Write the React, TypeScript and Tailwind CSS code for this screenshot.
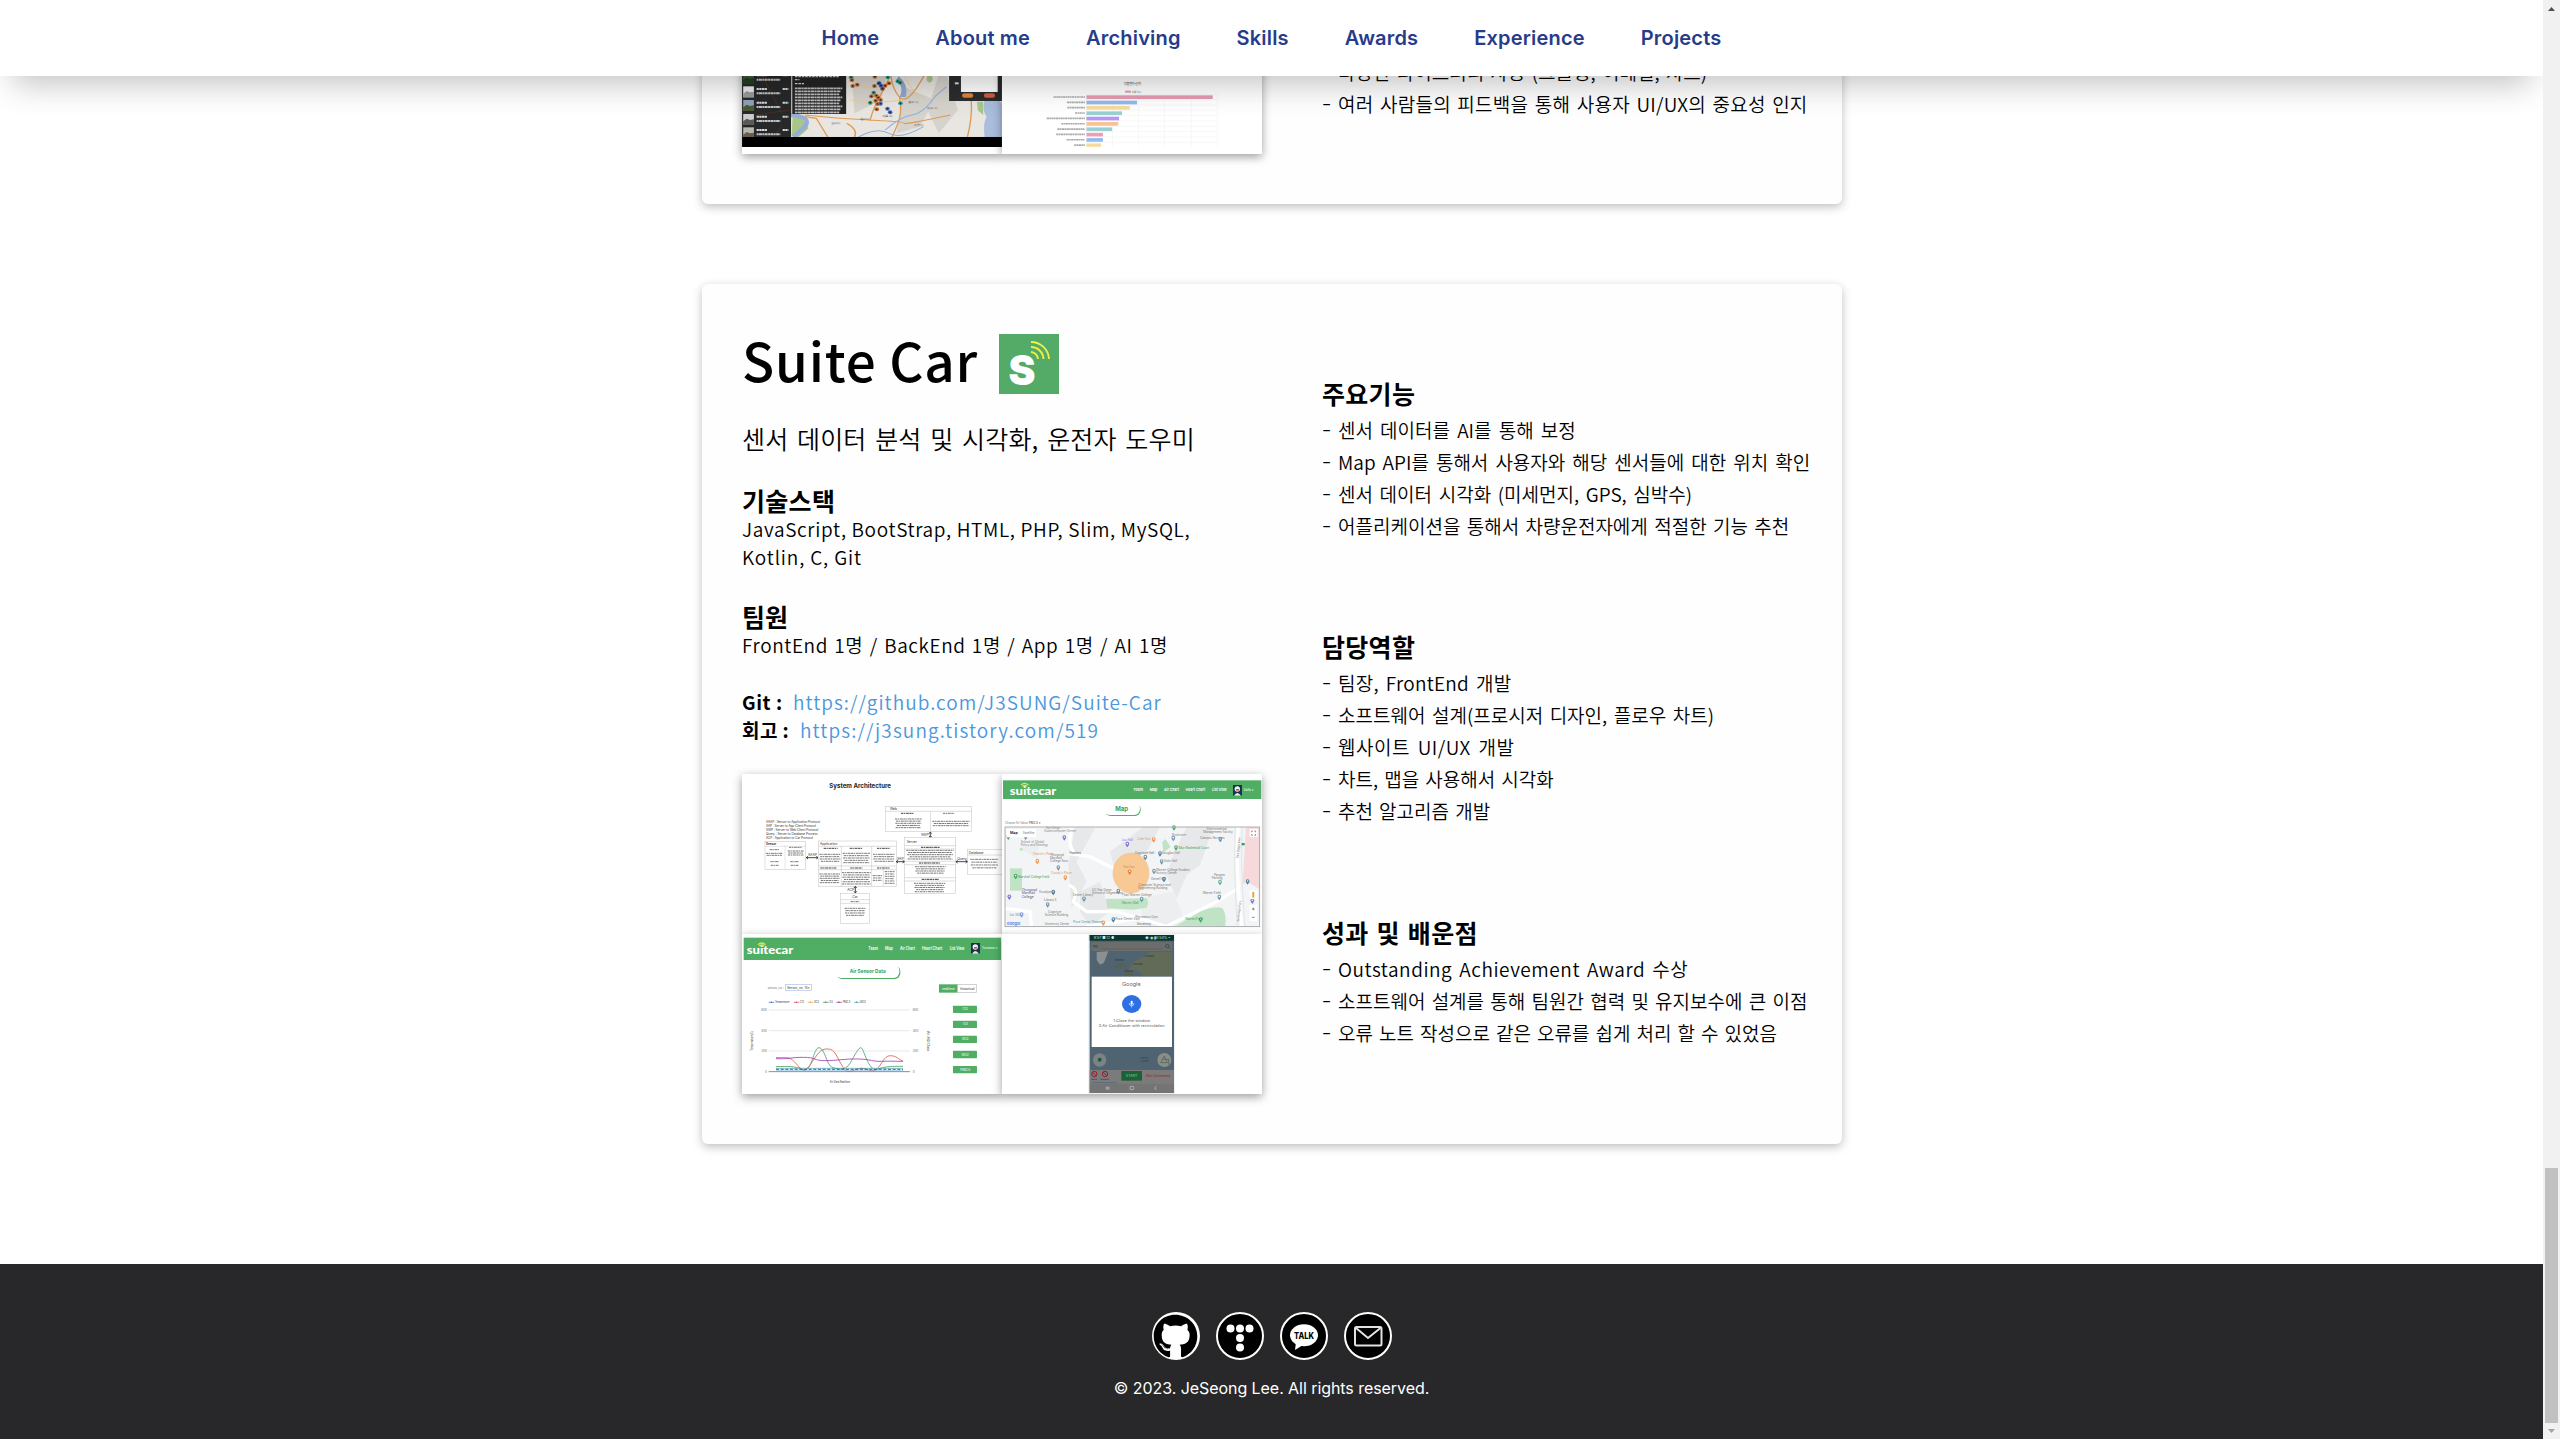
import type { ReactNode } from "react";
import { FaGithub } from "react-icons/fa";

const GREEN = "#4fae64";

function Thumb({ x, y, scale = "0.3333", children }: { x: number; y: number; scale?: string; children: ReactNode }) {
  return (
    <svg
      viewBox="0 0 260 160"
      className="block h-[160px] w-[260px] bg-white font-['Inter',sans-serif] shadow-[0_3px_9px_rgba(0,0,0,0.38)]"
    >
      <g transform={`translate(${x} ${y}) scale(${scale})`}>{children}</g>
    </svg>
  );
}

function T({
  x,
  y,
  s,
  children,
  c = "#333",
  a = "start",
  w = 400,
  l,
}: {
  x: number;
  y: number;
  s: number;
  children: string;
  c?: string;
  a?: "start" | "middle" | "end";
  w?: number;
  l?: number;
}) {
  return (
    <text x={x} y={y} fontSize={s} fill={c} textAnchor={a} fontWeight={w} textLength={l} lengthAdjust="spacingAndGlyphs">
      {children}
    </text>
  );
}

/* Rows of dashes standing for text too small to read */
function Scribble({ x, y, w, n, gap = 7, c = "#777" }: { x: number; y: number; w: number; n: number; gap?: number; c?: string }) {
  const shrink = [0, 0.08, 0.03, 0.14, 0.05];
  return (
    <g stroke={c} strokeWidth={3} strokeDasharray="7 1.5 4 2 9 1.5">
      {Array.from({ length: n }, (_, i) => {
        const d = (w * shrink[i % 5]) / 2;
        return <path key={i} d={`M${x + d} ${y + i * gap}H${x + w - d}`} />;
      })}
    </g>
  );
}

function Box({ x, y, w, h }: { x: number; y: number; w: number; h: number }) {
  return <rect x={x} y={y} width={w} height={h} fill="#fff" stroke="#c4c4c4" strokeWidth={1.6} />;
}

function Architecture() {
  return (
    <Thumb x={-7} y={-9}>
      <T x={283} y={69} s={20} w={700} c="#222" l={185}>System Architecture</T>
      <T x={93} y={175} s={10.5} l={162}>SAAP : Sensor to Application Protocol</T>
      <T x={93} y={187} s={10.5} l={150}>SAP : Server to App Client Protocol</T>
      <T x={93} y={199} s={10.5} l={157}>SWP : Server to Web Client Protocol</T>
      <T x={93} y={210} s={10.5} l={155}>Query : Server to Database Process</T>
      <T x={93} y={221} s={10.5} l={141}>ACP : Application to Car Protocol</T>

      <Box x={90} y={229} w={121} h={84} />
      <path d="M90 244H211M150 244V313" stroke="#ccc" strokeWidth={1.5} />
      <T x={93} y={240} s={9} w={700}>Sensor</T>
      <Scribble x={104} y={254} w={28} n={1} />
      <Scribble x={162} y={247} w={40} n={1} />
      <Scribble x={93} y={265} w={50} n={2} gap={6} />
      <Scribble x={158} y={258} w={48} n={3} gap={6} />
      <Scribble x={106} y={290} w={26} n={2} gap={11} />
      <Scribble x={166} y={290} w={26} n={2} gap={11} />

      <Box x={250} y={228} w={234} h={136} />
      <path d="M250 244H484M250 303H484M250 314H484M319 244V364M410 244V364M445 314V364" stroke="#bbb" strokeWidth={1.5} />
      <T x={255} y={240} s={11} l={52}>Application</T>
      <Scribble x={266} y={250} w={42} n={1} c="#444" />
      <Scribble x={344} y={250} w={38} n={1} c="#444" />
      <Scribble x={426} y={250} w={40} n={1} c="#444" />
      <Scribble x={253} y={268} w={64} n={4} />
      <Scribble x={323} y={265} w={82} n={5} />
      <Scribble x={414} y={268} w={66} n={4} />
      <Scribble x={256} y={309} w={48} n={1} c="#444" />
      <Scribble x={346} y={309} w={36} n={1} c="#444" />
      <Scribble x={426} y={309} w={38} n={1} c="#444" />
      <Scribble x={253} y={327} w={62} n={5} gap={6.5} />
      <Scribble x={321} y={323} w={86} n={6} gap={6.8} />
      <Scribble x={413} y={332} w={28} n={3} />
      <Scribble x={449} y={320} w={30} n={6} />

      <Box x={451} y={124} w={259} h={76} />
      <path d="M451 139H710M587 139V200" stroke="#bbb" strokeWidth={1.5} />
      <T x={465} y={135} s={10}>Web</T>
      <Scribble x={498} y={145} w={38} n={1} c="#444" />
      <Scribble x={624} y={145} w={34} n={1} />
      <Scribble x={480} y={162} w={80} n={5} gap={6.5} />
      <Scribble x={592} y={169} w={112} n={3} gap={6.5} />
      <T x={558} y={214} s={10}>SWP</T>
      <path d="M586 203V216M582 206L586 201L590 206M582 213L586 218L590 213" stroke="#222" strokeWidth={2.5} fill="none" />

      <Box x={509} y={218} w={153} h={168} />
      <path d="M509 242H662M509 252H662M509 289H662M509 299H662M509 338H662M509 348H662" stroke="#bbb" strokeWidth={1.5} />
      <T x={515} y={233} s={10}>Server</T>
      <Scribble x={558} y={247} w={56} n={1} c="#333" />
      <Scribble x={514} y={256} w={142} n={5} gap={6.5} />
      <Scribble x={552} y={294} w={64} n={1} c="#333" />
      <Scribble x={540} y={305} w={92} n={4} gap={6.5} />
      <Scribble x={560} y={343} w={52} n={1} c="#333" />
      <Scribble x={537} y={355} w={94} n={5} gap={6.3} />

      <Box x={697} y={254} w={110} h={74} />
      <path d="M697 270H800" stroke="#bbb" strokeWidth={1.5} />
      <T x={701} y={266} s={10}>Database</T>
      <Scribble x={706} y={283} w={84} n={4} gap={8.5} />

      <Box x={317} y={385} w={87} h={91} />
      <path d="M317 404H404M317 415H404" stroke="#bbb" strokeWidth={1.5} />
      <T x={352} y={398} s={10}>Car</T>
      <Scribble x={347} y={410} w={26} n={1} />
      <Scribble x={329} y={430} w={62} n={4} />

      <T x={219} y={274} s={10}>SAAP</T>
      <T x={486} y={284} s={10}>SAP</T>
      <T x={667} y={285} s={10}>Query</T>
      <T x={337} y={377} s={10}>ACP</T>
      <path d="M214 278H249M484 290H508M663 290H697M361 365V383" stroke="#222" strokeWidth={2.5} />
      <path d="M219 274L214 278L219 282M244 274L249 278L244 282M357 369L361 364L365 369M357 379L361 384L365 379M489 286L484 290L489 294M503 286L508 290L503 294M668 286L663 290L668 294M692 286L697 290L692 294" stroke="#222" strokeWidth={2.5} fill="none" />
    </Thumb>
  );
}

function Brand({ x, y }: { x: number; y: number }) {
  return (
    <g>
      <text x={x} y={y} fontSize={35} fontWeight={900} fill="#fff" textLength={140} lengthAdjust="spacingAndGlyphs" fontFamily="Lato">
        suitecar
      </text>
      <path d={`M${x + 34} ${y - 29}q11 -10 22 0M${x + 38} ${y - 25}q7 -6 14 0`} stroke="#d9e84a" strokeWidth={4} fill="none" />
    </g>
  );
}

function Avatar({ x, y }: { x: number; y: number }) {
  return (
    <g>
      <rect x={x} y={y} width={27} height={32} fill="#17344f" />
      <circle cx={x + 13} cy={y + 12} r={8} fill="#f2f2f2" />
      <path d={`M${x + 3} ${y + 32}q10 -16 21 0z`} fill="#dfe7ee" />
      <rect x={x + 9} y={y + 12} width={9} height={5} fill="#c05a4a" />
    </g>
  );
}

const PINS: [number, number, string][] = [
  [25, 218, "#5c7f92"], [77, 218, "#5c7f92"], [193, 220, "#6a5fd0"], [382, 240, "#6a5fd0"], [461, 226, "#e98a3c"],
  [520, 222, "#5c8aa0"], [661, 225, "#4b8db0"], [528, 250, "#2e9e50"], [480, 268, "#37708c"], [436, 279, "#4a7f99"],
  [485, 292, "#5c8aa0"], [462, 321, "#5c8aa0"], [492, 345, "#37708c"], [112, 291, "#e98a3c"], [175, 310, "#5c8aa0"],
  [196, 340, "#e98a3c"], [47, 336, "#2e9e50"], [389, 323, "#dd7a2c"], [355, 381, "#4a7f99"], [160, 384, "#37708c"],
  [143, 421, "#5c8aa0"], [252, 404, "#5c8aa0"], [28, 398, "#6a5fd0"], [425, 405, "#3f96a8"], [340, 466, "#2b6fa5"],
  [310, 476, "#e98a3c"], [602, 466, "#2e9e50"], [658, 399, "#5c8aa0"], [660, 354, "#4fa093"], [743, 352, "#37708c"],
  [757, 410, "#6a5fd0"], [65, 451, "#6a8fe0"], [522, 190, "#2e9e50"],
];

function MapShot() {
  return (
    <Thumb x={-2} y={-9}>
      <rect x={9} y={46} width={775} height={56} fill={GREEN} />
      <Brand x={29} y={89} />
      <T x={400} y={79} s={12} c="#fff" w={600} l={29}>Team</T>
      <T x={449} y={79} s={12} c="#fff" w={600} l={23}>Map</T>
      <T x={492} y={79} s={12} c="#fff" w={600} l={45}>Air Chart</T>
      <T x={557} y={79} s={12} c="#fff" w={600} l={59}>Heart Chart</T>
      <T x={636} y={79} s={12} c="#fff" w={600} l={44}>List View</T>
      <Avatar x={699} y={60} />
      <T x={731} y={78} s={10} c="#fff" l={30}>Dafla ▾</T>
      <rect x={315} y={116} width={107} height={37} rx={17} fill={GREEN} />
      <rect x={312} y={113} width={108} height={37} rx={17} fill="#fff" />
      <T x={365} y={139} s={18} c="#35a05a" w={700} a="middle">Map</T>
      <T x={15} y={178} s={10} c="#777" l={70}>Choose Air Value:</T>
      <T x={87} y={178} s={10} c="#333" l={34}>PM2.5 ▾</T>

      <rect x={15} y={186} width={764} height={299} fill="#f3f4f5" />
      <path d="M225 186L285 190L230 290L260 350L215 430L205 300Z M430 186L480 186L440 260L345 320L330 260Z M560 186L640 186L600 300L560 330L530 400L500 330L520 270Z M240 380L300 350L330 440L270 484L240 440Z" fill="#e6e8ea" />
      <path d="M420 400L520 380L560 484L430 484Z M60 250L120 230L110 280Z" fill="#edeeef" />
      <path d="M205 265L270 275L340 310M225 265Q200 240 215 190M205 360Q240 370 220 410L260 440L350 440L500 484M15 430L90 440L95 484M500 484L650 410L715 370M715 186Q705 300 725 484M260 484L420 460" stroke="#fff" strokeWidth={10} fill="none" />
      <path d="M706 186Q700 300 712 484M727 186Q720 300 735 484" stroke="#d9dcdf" strokeWidth={2} fill="none" />
      <rect x={30} y={310} width={36} height={67} fill="#bfe3c4" />
      <path d="M487 232L496 222L512 246L490 262Z" fill="#bfe3c4" />
      <path d="M318 402L440 400Q448 412 440 428L400 434L322 430Z" fill="#bfe3c4" />
      <path d="M528 482L600 440Q650 420 668 430Q680 450 676 483Z" fill="#bfe3c4" />
      <path d="M738 187H778V372L745 352L728 356Z" fill="#f6d9da" />
      <circle cx={64} cy={253} r={5} fill="#bfe3c4" />
      <ellipse cx={393} cy={324} rx={54} ry={60} fill="#f8c995" stroke="#f0bf86" strokeWidth={1.5} />
      {PINS.map(([px, py, c], i) => (
        <g key={i} opacity={0.85}>
          <path d={`M${px - 5.5} ${py - 4}a5.5 5.5 0 1 1 11 0q0 5 -5.5 11q-5.5 -6 -5.5 -11z`} fill={c} />
          <circle cx={px} cy={py - 4} r={2.4} fill="#fff" />
        </g>
      ))}
      <T x={62} y={235} s={9} c="#888">School of Global</T>
      <T x={62} y={244} s={9} c="#888">Policy and Strategy</T>
      <T x={137} y={193} s={9} c="#888">San Diego</T>
      <T x={132} y={202} s={9} c="#888">Supercomputer Center</T>
      <T x={98} y={270} s={9} c="#d89a6a">Charlie's Place</T>
      <T x={150} y={272} s={9} c="#777">Thurgood</T>
      <T x={150} y={281} s={9} c="#777">Marshall</T>
      <T x={150} y={290} s={9} c="#777">College Apts</T>
      <T x={208} y={268} s={9} c="#444">Hopkins</T>
      <T x={54} y={339} s={9} c="#3a9a58">Marshall College Field</T>
      <T x={65} y={378} s={10} c="#557">Thurgood</T>
      <T x={65} y={388} s={10} c="#557">Marshall</T>
      <T x={65} y={398} s={10} c="#557">College</T>
      <T x={118} y={383} s={9} c="#777">Eucalyptus</T>
      <T x={154} y={328} s={9} c="#d89a6a">Goody's Place</T>
      <T x={365} y={228} s={9} c="#8a80d8">Lou Hall</T>
      <T x={412} y={226} s={9} c="#d89a6a">Café Vita</T>
      <T x={516} y={212} s={9} c="#888">Bookstore</T>
      <T x={536} y={251} s={9} c="#3a9a58">Muir Basketball Court</T>
      <T x={486} y={268} s={9} c="#777">Douglas Hall</T>
      <T x={492} y={292} s={9} c="#777">Solis Hall</T>
      <T x={404} y={266} s={9} c="#666">Cognitive Hall</T>
      <T x={370} y={310} s={9} c="#c98850">Fan Fan</T>
      <T x={468} y={318} s={9} c="#777">Warren College Student</T>
      <T x={468} y={327} s={9} c="#777">Activity Center</T>
      <T x={453} y={345} s={9} c="#777">Geisel Hall</T>
      <T x={415} y={362} s={9} c="#777">Computer Science and</T>
      <T x={415} y={371} s={9} c="#777">Engineering Building</T>
      <T x={276} y={379} s={9} c="#777">UC San Diego</T>
      <T x={276} y={388} s={9} c="#777">School of Engineering</T>
      <T x={371} y={392} s={9} c="#777">Earl Warren College</T>
      <T x={365} y={416} s={9} c="#5a9a68">Warren Mall</T>
      <T x={218} y={392} s={9} c="#777">Center Library</T>
      <T x={132} y={408} s={9} c="#777">Library II</T>
      <T x={144} y={444} s={9} c="#777">Cognitive</T>
      <T x={134} y={453} s={9} c="#777">Science Building</T>
      <T x={134} y={479} s={9} c="#777">University Center</T>
      <T x={219} y={474} s={9} c="#3f96a8">Price Center Theater</T>
      <T x={346} y={466} s={9} c="#777">Price Center East</T>
      <T x={406} y={458} s={9} c="#777">Recreation Gym</T>
      <T x={410} y={481} s={9} c="#555">University</T>
      <T x={620} y={194} s={9} c="#777">Environmental</T>
      <T x={610} y={203} s={9} c="#777">Management Facility</T>
      <T x={600} y={223} s={9} c="#777">Campus Services</T>
      <T x={642} y={334} s={9} c="#777">Pangea</T>
      <T x={635} y={343} s={9} c="#777">Parking</T>
      <T x={608} y={388} s={9} c="#777">Warren Field</T>
      <T x={555} y={466} s={9} c="#3a9a58">Warren Field</T>
      <T x={29} y={452} s={9} c="#777">Lot 352</T>
      <g transform="rotate(-84 712 280)"><T x={712} y={283} s={9} c="#666">San Diego Fwy</T></g>
      <g transform="rotate(-84 712 470)"><T x={712} y={475} s={9} c="#666">San Diego Fwy</T></g>
      <rect x={20} y={192} width={88} height={25} fill="#fff" />
      <T x={30} y={208} s={11} c="#222" w={600}>Map</T>
      <T x={68} y={208} s={11} c="#777" l={35}>Satellite</T>
      <rect x={749} y={192} width={24} height={24} fill="#fff" />
      <path d="M755 202V198H759M763 198H767V202M767 207V211H763M759 211H755V207" stroke="#666" strokeWidth={2} fill="none" />
      <rect x={749} y={376} width={22} height={26} fill="#fff" />
      <circle cx={760} cy={384} r={3.5} fill="#e9a83a" />
      <rect x={757} y={387} width={6} height={11} fill="#e9a83a" />
      <rect x={749} y={420} width={22} height={48} fill="#fff" />
      <path d="M756 432H764M760 428V436M756 457H764" stroke="#555" strokeWidth={2} />
      <rect x={725} y={234} width={9} height={7} fill="#2f9e60" />
      <T x={20} y={479} s={12} c="#4a80e8" w={600}>Google</T>
      <rect x={15} y={186} width={764} height={299} fill="none" stroke="#9da0a4" strokeWidth={2.5} />
    </Thumb>
  );
}

const LEGEND: [number, number, string, string][] = [
  [101, 43, "#3a62c8", "Temperature"], [176, 12, "#d6455c", "CO"], [218, 15, "#e8a23c", "SO2"],
  [264, 11, "#3b8f56", "O3"], [304, 23, "#8a2fa5", "PM2.5"], [357, 17, "#3ba0a8", "NO2"],
];

function AirChart() {
  return (
    <Thumb x={-7} y={-4}>
      <rect x={26} y={23} width={772} height={67} fill={GREEN} />
      <Brand x={35} y={73} />
      <T x={400} y={59} s={13} c="#fff" w={600} l={29}>Team</T>
      <T x={450} y={59} s={13} c="#fff" w={600} l={24}>Map</T>
      <T x={495} y={59} s={13} c="#fff" w={600} l={45}>Air Chart</T>
      <T x={561} y={59} s={13} c="#fff" w={600} l={61}>Heart Chart</T>
      <T x={644} y={59} s={13} c="#fff" w={600} l={44}>List View</T>
      <Avatar x={708} y={39} />
      <T x={741} y={57} s={10} c="#fff" l={48}>Yunseon ▾</T>
      <rect x={304} y={107} width={192} height={40} rx={17} fill={GREEN} />
      <rect x={301} y={104} width={192} height={40} rx={17} fill="#fff" />
      <T x={344} y={130} s={16} c="#35a05a" w={700} l={108}>Air Sensor Data</T>
      <T x={98} y={176} s={10} c="#777" l={48}>sensor_no :</T>
      <rect x={152} y={163} width={77} height={18} fill="#fff" stroke="#a9c0e6" strokeWidth={2} />
      <T x={156} y={176} s={10} l={70}>Sensor_no. 15 ▾</T>
      <rect x={612} y={163} width={56} height={25} fill={GREEN} />
      <rect x={668} y={163} width={56} height={24} fill="#fff" stroke="#bbb" strokeWidth={2} />
      <T x={640} y={179} s={10} c="#fff" a="middle">realtime</T>
      <T x={697} y={179} s={10} a="middle">historical</T>
      {LEGEND.map(([lx, w, c, name]) => (
        <g key={name}>
          <path d={`M${lx} 217H${lx + 17}`} stroke={c} strokeWidth={2} />
          <circle cx={lx + 8} cy={217} r={2.2} fill={c} />
          <T x={lx + 19} y={220} s={9} l={w}>{name}</T>
        </g>
      ))}
      <path d="M101 240H525M101 302H525M101 363H525" stroke="#ddd" strokeWidth={2} />
      <path d="M101 425H525" stroke="#555" strokeWidth={2} />
      {["600", "400", "200", "0"].map((n, i) => (
        <g key={n}>
          <T x={96} y={243 + i * 62} s={9} c="#666" a="end">{n}</T>
          <T x={533} y={243 + i * 62} s={9} c="#666">{n}</T>
        </g>
      ))}
      <path d="M123 410C160 409 180 408 205 419S235 353 252 353S275 405 290 411S330 425 345 400S370 353 378 353S400 425 425 418S450 409 504 409" stroke="#4fa06a" strokeWidth={2.5} fill="none" />
      <path d="M123 383C165 383 165 380 185 403S210 428 232 395S260 356 280 357S305 380 320 405S340 425 350 423S365 415 380 415S405 425 420 421S445 376 466 377S490 388 504 394" stroke="#d6604f" strokeWidth={2.5} fill="none" />
      <path d="M123 386C160 388 165 382 205 382S235 392 270 392S330 386 370 387S410 395 440 394S480 394 504 394" stroke="#a53bb5" strokeWidth={2.5} fill="none" />
      <path d="M123 415H504" stroke="#3ba0a8" strokeWidth={2} />
      <path d="M123 418H504" stroke="#2c4fc0" strokeWidth={3} strokeDasharray="9 5" />
      <path d="M123 421H504" stroke="#7ab2e0" strokeWidth={2} />
      <T x={284} y={458} s={10} l={61}>Air Data Realtime</T>
      <g transform="rotate(-90 53 362)"><T x={53} y={362} s={9} l={58}>Temperature(C)</T></g>
      <g transform="rotate(90 575 303)"><T x={575} y={303} s={9} l={60}>Air AQI Data</T></g>
      {["CO", "O3", "SO2", "NO2", "PM2.5"].map((n, i) => (
        <g key={n}>
          <rect x={654} y={227 + i * 45.2} width={72} height={22} rx={2} fill={GREEN} />
          <T x={691} y={241 + i * 45.2} s={10} c="#fff" a="middle">{n}</T>
        </g>
      ))}
    </Thumb>
  );
}

function Phone() {
  return (
    <Thumb x={-2} y={-4}>
      <rect x={264} y={10} width={261} height={482} fill="#eef2f2" />
      <rect x={269} y={15} width={253} height={474} fill="#4f6371" />
      <rect x={269} y={15} width={253} height={17} fill="#08352e" />
      <T x={281} y={27} s={11} c="#cfe0dc" l={62}>9:57 ■ ▢ ●</T>
      <T x={435} y={27} s={11} c="#cfe0dc" l={76}>◆ ◉ ▮ill 54% ▪</T>
      <path d="M290 66L325 64L312 98L300 104L290 90Z" fill="#8b9093" />
      <path d="M385 124L400 96L430 80L450 66L517 66V138L430 138L410 118Z" fill="#626b58" />
      <path d="M340 112Q355 95 380 104L378 112Z M372 128L395 124L402 138H376Z" fill="#566250" />
      <T x={344} y={94} s={8} c="#2b343a">Iceland</T>
      <T x={435} y={80} s={8} c="#2b343a">Finland</T>
      <T x={400} y={106} s={8} c="#2b343a">Norway</T>
      <T x={373} y={126} s={8} c="#2b343a">Ireland</T>
      <rect x={274} y={36} width={243} height={27} rx={2} fill="#6b6d6d" />
      <path d="M279 47H293M279 51H293" stroke="#1b5a45" strokeWidth={2.5} />
      <path d="M303 57H487" stroke="#555" strokeWidth={1.5} />
      <circle cx={502} cy={48} r={5} fill="none" stroke="#164c3d" strokeWidth={2} />
      <path d="M506 52L511 57" stroke="#164c3d" strokeWidth={2} />
      <rect x={275} y={140} width={241} height={211} fill="#fff" />
      <T x={366} y={168} s={16} c="#666" l={56}>Google</T>
      <ellipse cx={395} cy={222} rx={29} ry={27} fill="#2f6fe4" />
      <rect x={392} y={212} width={6} height={12} rx={3} fill="#fff" />
      <path d="M388 220a7 7 0 0 0 14 0M395 227V232" stroke="#fff" strokeWidth={2} fill="none" />
      <T x={395} y={276} s={11} c="#555" a="middle" l={110}>1.Close the window</T>
      <T x={395} y={290} s={11} c="#555" a="middle" l={198}>2.Air Conditioner with recirculation</T>
      <circle cx={299} cy={390} r={20} fill="#7d8384" />
      <circle cx={299} cy={389} r={6} fill="#1d5a45" />
      <circle cx={493} cy={390} r={21} fill="#8a8e88" />
      <path d="M482 398L493 378L502 398L482 398ZM488 388H506V404" stroke="#495b50" strokeWidth={2} fill="none" />
      <T x={418} y={386} s={8} c="#33434e">Atlantic</T>
      <T x={422} y={395} s={8} c="#33434e">Ocean</T>
      <rect x={269} y={420} width={253} height={42} fill="#7b7b7b" />
      {[283, 315].map((cx) => (
        <g key={cx}>
          <circle cx={cx} cy={432} r={8} fill="none" stroke="#9b1c2a" strokeWidth={3} />
          <path d={`M${cx - 6} 426L${cx + 6} 438`} stroke="#9b1c2a" strokeWidth={3} />
        </g>
      ))}
      <path d="M274 448H292M301 448H327" stroke="#444" strokeWidth={2.5} strokeDasharray="5 1" />
      <path d="M274 458H351" stroke="#3e5a80" strokeWidth={1.5} />
      <rect x={364} y={423} width={62} height={29} fill="#1b6238" />
      <T x={395} y={441} s={11} c="#8ac79c" a="middle">START</T>
      <T x={439} y={440} s={10} c="#9b1c2a" l={72}>Not Connected</T>
      <rect x={269} y={462} width={253} height={27} fill="#747474" />
      <path d="M319 470V479M323 470V479M327 470V479M469 469L464 474L469 480" stroke="#ccc" strokeWidth={2} fill="none" />
      <rect x={390} y={469} width={11} height={10} rx={3} fill="none" stroke="#ccc" strokeWidth={2} />
    </Thumb>
  );
}

const DOTS: [number, number, string][] = [
  [421, 232, "#2aa08a"], [423, 240, "#c46a2c"], [425, 258, "#c46a2c"], [437, 254, "#c46a2c"], [483, 230, "#c46a2c"],
  [494, 250, "#2f4fa0"], [499, 257, "#3a5fc0"], [503, 266, "#8a4a5a"], [510, 257, "#c46a2c"], [520, 250, "#c46a2c"],
  [482, 258, "#c46a2c"], [517, 232, "#3aa890"], [543, 244, "#2aa08a"], [549, 248, "#2aa08a"], [480, 278, "#2aa08a"],
  [474, 289, "#c46a2c"], [487, 287, "#c46a2c"], [492, 293, "#c46a2c"], [498, 300, "#c46a2c"], [485, 302, "#c46a2c"],
  [471, 308, "#2aa08a"], [490, 312, "#c46a2c"], [498, 311, "#4a70d0"], [488, 328, "#c46a2c"], [516, 326, "#4a70d0"],
  [523, 337, "#3a60c8"], [550, 310, "#2aa0b8"],
];

function DarkMap() {
  return (
    <Thumb x={-52} y={6} scale="0.3827 0.3333">
      <rect x={136} y={190} width={679} height={221} fill="#e9e5e0" />
      <path d="M420 190L520 190L500 300L430 340Z M560 260L640 300L600 380L540 400Z M660 190L700 330L650 400L620 330Z" fill="#d6d2cc" />
      <path d="M770 300Q800 290 815 310V411H770Q765 370 775 350Q762 330 770 300Z" fill="#a9bddc" />
      <path d="M545 228Q570 250 565 290L548 292Q560 260 540 240Z" fill="#8fa6cc" />
      <path d="M620 228h12q6 14 -6 20q-12 -4 -6 -20zM750 305h16v40l-14 -14zM268 345l22 4l20 36l-26 26l-18 -4z" fill="#a8c68c" />
      <path d="M262 345Q320 350 300 380L270 411" stroke="#96add4" strokeWidth={12} fill="none" />
      <path d="M300 345Q380 355 470 360T560 370T680 345M470 362Q480 320 505 270T525 190M525 228Q530 270 548 292T600 250T620 190M548 292Q556 340 540 380L528 411M735 303Q738 350 725 411M410 370Q440 390 430 411M300 350L330 355L360 411" stroke="#df9a52" strokeWidth={3.5} fill="none" />
      <path d="M510 390Q550 350 580 345T640 290L670 260M440 411Q490 380 520 400T610 380" stroke="#8db0dc" strokeWidth={3} fill="none" />
      <path d="M415 240Q470 280 520 250M420 300L470 310L560 300M560 230L600 300" stroke="#f2c878" strokeWidth={2} fill="none" />
      <T x={368} y={372} s={9} c="#555">성남시</T>
      <T x={444} y={360} s={9} c="#555">용인시</T>
      <T x={585} y={378} s={9} c="#555">이천시</T>
      <T x={620} y={328} s={9} c="#555">여주시</T>
      <T x={570} y={310} s={9} c="#555">광주시</T>
      <T x={502} y={351} s={9} c="#334">서울시</T>
      {DOTS.map(([cx, cy, c], i) => (
        <g key={i}>
          <circle cx={cx} cy={cy} r={6} fill={c} />
          <circle cx={cx} cy={cy} r={2.5} fill="#2a2420" />
        </g>
      ))}
      <rect x={136} y={190} width={128} height={221} fill="#26282a" />
      <path d="M190 228L240 340M170 345L262 330M215 411L240 380" stroke="#5a3020" strokeWidth={2} />
      {[218, 259, 300, 342, 382].map((y, i) => (
        <g key={y}>
          <rect x={139} y={y} width={28} height={Math.min(33, 411 - y)} fill={["#3e5d34", "#e8e8e8", "#8fa0b8", "#c9cdd0", "#b9b6ac"][i]} />
          <path d={`M139 ${y + 22}l9 -8l9 4l10 -2v${Math.min(17, 395 - y)}h-28z`} fill={["#22401e", "#9a9a9a", "#4a5a34", "#5c5a56", "#6a5c50"][i]} />
          <path d={`M174 ${y + 8}H202M242 ${y + 8}H257`} stroke="#d8d8d8" strokeWidth={6} strokeDasharray="6 1" />
          <path d={`M174 ${y + 21}H236`} stroke="#c4c4c4" strokeWidth={6} strokeDasharray="5 1 8 1" />
        </g>
      ))}
      <rect x={266} y={190} width={142} height={152} fill="#242424" />
      <path d="M267 190V342" stroke="#aaa" strokeWidth={1.5} />
      <path d="M274 230H390M274 239H286M274 251H298" stroke="#ccc" strokeWidth={4} strokeDasharray="7 2" />
      {Array.from({ length: 9 }, (_, i) => (
        <path key={i} d={`M274 ${265 + i * 9}H${398 - (i % 3) * 4}`} stroke="#bdbdbd" strokeWidth={5.5} strokeDasharray="6 1 9 1" />
      ))}
      <rect x={677} y={190} width={138} height={113} fill="#2b2c2e" />
      <rect x={708} y={190} width={96} height={86} fill="#fff" />
      <path d="M692 250H702" stroke="#ddd" strokeWidth={6} />
      <rect x={711} y={280} width={29} height={13} rx={6} fill="#dd8434" />
      <rect x={768} y={280} width={29} height={13} rx={6} fill="#d35a40" />
      <rect x={136} y={411} width={679} height={30} fill="#000" />
    </Thumb>
  );
}

const BARS: [number, string, number][] = [
  [1366, "#e79ab0", 950], [1168, "#8fbcee", 985], [1149, "#f6dc9b", 986], [1129, "#98d0d3", 1006], [1121, "#b894f4", 932],
  [1119, "#f6c48c", 970], [1103, "#98d0d3", 960], [1079, "#f09cb2", 957], [1079, "#8fbcee", 984], [1074, "#f6dc9b", 1004],
];

function BarChart() {
  return (
    <Thumb x={-312} y={6} scale="0.3827 0.3333">
      <text x={1133} y={256} fontSize={10} fill="#555" fontFamily="Noto Sans CJK KR" textLength={46}>작품별 수 순위</text>
      <rect x={1137} y={272} width={15} height={6} fill="#e79ab0" />
      <text x={1154} y={278} fontSize={7} fill="#777" fontFamily="Noto Sans CJK KR">작품개수</text>
      <path d="M1036 283V441M1104 283V441M1172 283V441M1240 283V441M1310 283V441M1378 283V441M1036 283H1378M1036 299H1378M1036 315H1378M1036 331H1378M1036 347H1378M1036 363H1378M1036 379H1378M1036 395H1378M1036 411H1378M1036 427H1378" stroke="#f2f2f2" strokeWidth={1.5} />
      {BARS.map(([end, c, lx], i) => (
        <g key={i}>
          <rect x={1036} y={286 + i * 16.05} width={end - 1036} height={i === 9 ? 10 : 11} fill={c} />
          <path d={`M${lx} ${291 + i * 16.05}H1032`} stroke="#aaa" strokeWidth={5} strokeDasharray="6 1 4 1" />
        </g>
      ))}
    </Thumb>
  );
}

type Line = [text: string, spacing: string];

function List({ items }: { items: Line[] }) {
  return (
    <ul>
      {items.map(([text, spacing]) => (
        <li key={text} className="flex h-8 text-[19px] leading-8 whitespace-nowrap">
          <span className="-mt-0.5 w-4 origin-left scale-x-140">-</span>
          <span className={spacing}>{text}</span>
        </li>
      ))}
    </ul>
  );
}

function Section({ title, items, className = "" }: { title: string; items: Line[]; className?: string }) {
  return (
    <section className={className}>
      <h3 className="mb-[6px] h-[30px] text-[25px] leading-[30px] font-bold tracking-[0.3px] [word-spacing:2px]">{title}</h3>
      <List items={items} />
    </section>
  );
}

const FEATURES: Line[] = [
  ["센서 데이터를 AI를 통해 보정", "[word-spacing:2.9px]"],
  ["Map API를 통해서 사용자와 해당 센서들에 대한 위치 확인", "[word-spacing:2.8px]"],
  ["센서 데이터 시각화 (미세먼지, GPS, 심박수)", "[word-spacing:2.4px]"],
  ["어플리케이션을 통해서 차량운전자에게 적절한 기능 추천", "[word-spacing:2.1px]"],
];
const ROLES: Line[] = [
  ["팀장, FrontEnd 개발", "[word-spacing:2.5px] tracking-[0.25px]"],
  ["소프트웨어 설계(프로시저 디자인, 플로우 차트)", "[word-spacing:2.3px]"],
  ["웹사이트 UI/UX 개발", "[word-spacing:3px] tracking-[0.5px]"],
  ["차트, 맵을 사용해서 시각화", "[word-spacing:1.9px]"],
  ["추천 알고리즘 개발", "[word-spacing:1.9px]"],
];
const RESULTS: Line[] = [
  ["Outstanding Achievement Award 수상", "[word-spacing:2.2px] tracking-[0.55px]"],
  ["소프트웨어 설계를 통해 팀원간 협력 및 유지보수에 큰 이점", "[word-spacing:2px]"],
  ["오류 노트 작성으로 같은 오류를 쉽게 처리 할 수 있었음", "[word-spacing:1.8px]"],
];
const PREVIOUS: Line[] = [
  ["다양한 라이브러리 사용 (크롤링, 이메일, 차트)", "[word-spacing:2.1px]"],
  ["여러 사람들의 피드백을 통해 사용자 UI/UX의 중요성 인지", "[word-spacing:2px] tracking-[0.25px]"],
];

function Logo() {
  return (
    <svg viewBox="0 0 60 60" className="size-[60px] bg-[#54ab67]">
      <text x={9.5} y={50.5} fontSize={41} fontWeight={900} fill="#fff" fontFamily="Inter" textLength={27} lengthAdjust="spacingAndGlyphs">
        S
      </text>
      <path d="M32 8A18 18 0 0 1 50 25M32 13A12.5 12.5 0 0 1 44.5 25M32 18A7.5 7.5 0 0 1 39 25" stroke="#f0ee48" strokeWidth={1.9} fill="none" />
    </svg>
  );
}

function Circle({ children }: { children: ReactNode }) {
  return (
    <a className="flex size-12 items-center justify-center overflow-hidden rounded-full border-2 border-white bg-black">{children}</a>
  );
}

export default function App() {
  return (
    <div className="flex h-[1439px] w-[2560px] overflow-hidden bg-white font-['Noto_Sans_CJK_KR',sans-serif] text-black">
      <div className="relative flex w-[2543px] flex-col overflow-hidden">
        <header className="absolute inset-x-0 top-0 z-10 flex h-[76px] items-center justify-center gap-14 bg-white font-['Inter',sans-serif] text-[20px] font-semibold tracking-[0.18px] text-[#263c8b] shadow-[0_20px_32px_-12px_rgba(0,0,0,0.24)]">
          {["Home", "About me", "Archiving", "Skills", "Awards", "Experience", "Projects"].map((n) => (
            <a key={n}>{n}</a>
          ))}
        </header>

        <main className="flex flex-col items-center pl-px">
          <article className="flex h-[204px] w-[1140px] rounded-b-md bg-[#fefefe] pl-10 font-[350] shadow-[0_3px_10px_rgba(0,0,0,0.25)]">
            <div className="-mt-[6px] mr-[60px] flex w-[520px]">
              <DarkMap />
              <BarChart />
            </div>
            <div className="pt-14">
              <List items={PREVIOUS} />
            </div>
          </article>

          <article className="mt-20 flex h-[860px] w-[1140px] rounded-md bg-[#fefefe] pl-10 font-[350] shadow-[0_3px_10px_rgba(0,0,0,0.25)]">
            <div className="mr-[60px] flex w-[520px] flex-col pt-[50px]">
              <div className="flex h-[60px] items-center">
                <h2 className="mr-[21px] w-[236px] pb-[11px] text-[53px] leading-[60px] font-medium tracking-[0.8px] whitespace-nowrap">Suite Car</h2>
                <Logo />
              </div>
              <p className="mt-[26px] mb-px h-9 text-[25px] leading-9 font-[350] tracking-[0.15px] [word-spacing:3px]">센서 데이터 분석 및 시각화, 운전자 도우미</p>
              <h3 className="mt-[28px] h-[30px] text-[25px] leading-[30px] font-bold tracking-[0.3px]">기술스택</h3>
              <div className="text-[19px] leading-7">
                <p className="tracking-[0.66px]">
                  JavaScript, BootStrap, HTML, PHP, Slim, MySQL,
                  <br />
                  <span className="tracking-[0.85px]">Kotlin, C, Git</span>
                </p>
                <h3 className="mt-[30px] h-[30px] text-[25px] leading-[30px] font-bold">팀원</h3>
                <p className="tracking-[0.6px] [word-spacing:1.5px]">FrontEnd 1명 / BackEnd 1명 / App 1명 / AI 1명</p>
                <p className="mt-[29px] flex">
                  <b className="w-[51px] tracking-[0.6px]">Git :</b>
                  <a className="tracking-[1.05px] text-[#4a97dd]">https://github.com/J3SUNG/Suite-Car</a>
                </p>
                <p className="flex">
                  <b className="w-[58px] tracking-[0.4px]">회고 :</b>
                  <a className="tracking-[1.12px] text-[#4a97dd]">https://j3sung.tistory.com/519</a>
                </p>
              </div>
              <div className="mt-[30px] grid grid-cols-2">
                <Architecture />
                <MapShot />
                <AirChart />
                <Phone />
              </div>
            </div>
            <div className="pt-[94px]">
              <Section title="주요기능" items={FEATURES} />
              <Section className="mt-[89px]" title="담당역할" items={ROLES} />
              <Section className="mt-[90px]" title="성과 및 배운점" items={RESULTS} />
            </div>
          </article>
        </main>

        <footer className="mt-[120px] flex h-[175px] shrink-0 flex-col items-center bg-[#28282a] pt-12 font-['Inter',sans-serif] text-white">
          <div className="flex gap-4">
            <a className="flex size-12 items-center justify-center rounded-full bg-white">
              <FaGithub className="size-[45px] text-black" />
            </a>
            <Circle>
              <svg viewBox="0 0 48 48" className="size-12 shrink-0" fill="#fff">
                <circle cx="14.5" cy="16.5" r="4" />
                <circle cx="24" cy="16.5" r="4" />
                <circle cx="33.5" cy="16.5" r="4" />
                <circle cx="24" cy="26" r="4" />
                <circle cx="24" cy="35.5" r="4" />
              </svg>
            </Circle>
            <Circle>
              <svg viewBox="0 0 48 48" className="size-12 shrink-0">
                <ellipse cx="24" cy="23.3" rx="14" ry="11" fill="#fff" />
                <path d="M16 30L15 38L23 33Z" fill="#fff" />
                <text x="24" y="27" fontSize="9" fontWeight={800} textAnchor="middle" textLength="20" lengthAdjust="spacingAndGlyphs">
                  TALK
                </text>
              </svg>
            </Circle>
            <Circle>
              <svg viewBox="0 0 48 48" className="size-12 shrink-0" fill="none" stroke="#e2e2e2" strokeWidth="2">
                <rect x="11" y="15" width="26.5" height="18.5" rx="1.5" />
                <path d="M12 16L24 26L36.5 16" />
              </svg>
            </Circle>
          </div>
          <p className="mt-4 text-[16px] leading-6 tracking-[-0.06px]">© 2023. JeSeong Lee. All rights reserved.</p>
        </footer>
      </div>

      <div className="flex w-[17px] flex-col items-center bg-[#f1f1f1]">
        <svg viewBox="0 0 17 17" className="size-[17px]" fill="#505050">
          <path d="M8.5 7L12 11H5Z" />
        </svg>
        <div className="mt-[1151px] h-[255px] w-[13px] bg-[#c1c1c1]" />
        <svg viewBox="0 0 17 16" className="h-4 w-[17px]" fill="#a3a3a3">
          <path d="M5 6H12L8.5 10Z" />
        </svg>
      </div>
    </div>
  );
}
